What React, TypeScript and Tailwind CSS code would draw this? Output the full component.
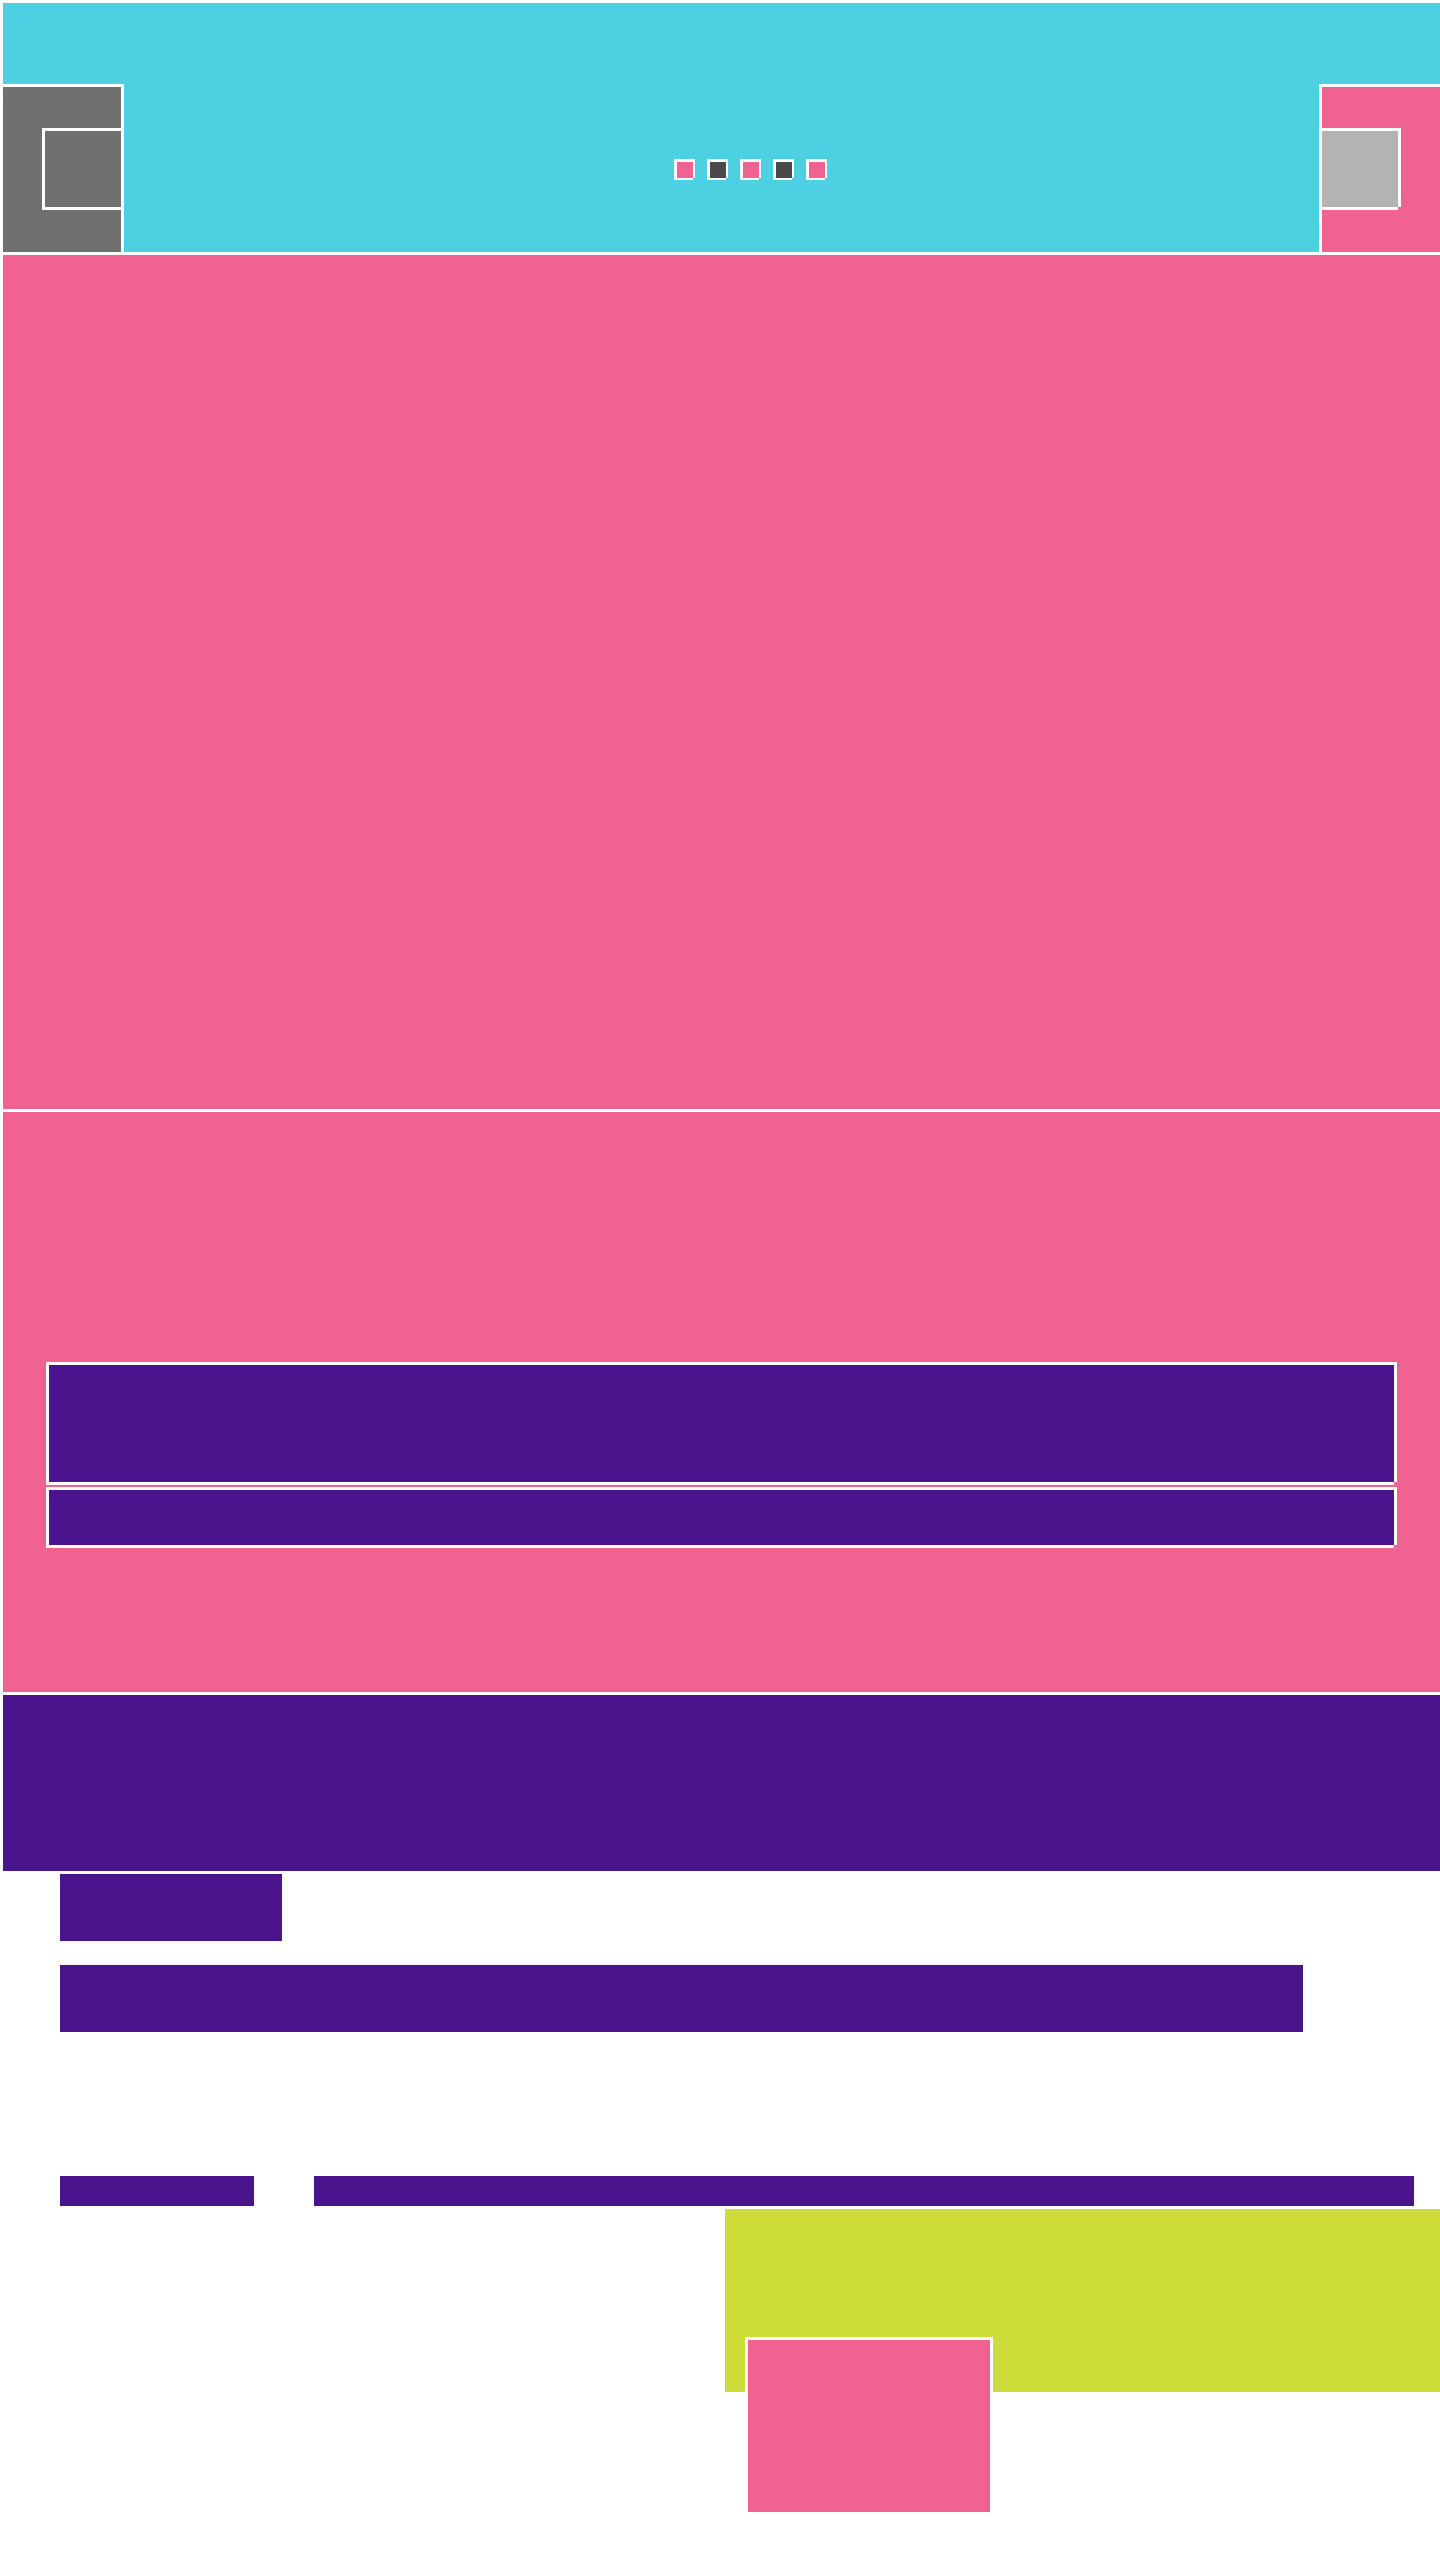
export default function App() {
  const dots = ['bg-[#f06292]', 'bg-[#4a4a4a]', 'bg-[#f06292]', 'bg-[#4a4a4a]', 'bg-[#f06292]'];

  return (
    <div className="min-h-[2560px] bg-white pt-[3px] pl-[3px]">
      {/* header */}
      <header className="h-[249px] bg-[#4dd0e1] pt-[81px]">
        <div className="flex h-[168px] items-stretch">
          <div className="w-[121px] border-t-[3px] border-r-[3px] border-white bg-[#707070] pt-[41px] pl-[39px]">
            <div className="h-[82px] w-[79px] border-y-[3px] border-l-[3px] border-white bg-[#707070]" />
          </div>

          <div className="flex flex-1 items-center gap-[14px] pl-[550px]">
            {dots.map((c, i) => (
              <div
                key={i}
                className={`h-[19px] w-[19px] border-t-[3px] border-l-[3px] border-white shadow-[2px_0_0_#fff,0_2px_0_#fff] ${c}`}
              />
            ))}
          </div>

          <div className="w-[121px] border-t-[3px] border-l-[3px] border-white bg-[#f06292] pt-[41px]">
            <div className="h-[79px] w-[76px] border-t-[3px] border-white bg-[#b3b3b3] shadow-[3px_0_0_#fff,0_3px_0_#fff]" />
          </div>
        </div>
      </header>

      {/* hero */}
      <section className="mt-[3px] h-[854px] bg-[#f06292]" />

      {/* second band */}
      <section className="mt-[3px] h-[580px] bg-[#f06292] pt-[250px] pl-[43px]">
        <div className="h-[120px] w-[1348px] border-t-[3px] border-l-[3px] border-white bg-[#4a148c] shadow-[3px_0_0_#fff,0_3px_0_#fff]" />
        <div className="mt-[5px] h-[58px] w-[1348px] border-t-[3px] border-l-[3px] border-white bg-[#4a148c] shadow-[3px_0_0_#fff,0_3px_0_#fff]" />
      </section>

      {/* purple band */}
      <section className="mt-[3px] h-[176px] bg-[#4a148c]" />

      {/* content rows */}
      <div className="pt-[3px]">
        <div className="ml-[57px] h-[67px] w-[222px] bg-[#4a148c]" />
        <div className="mt-[24px] ml-[57px] h-[67px] w-[1243px] bg-[#4a148c]" />

        <div className="mt-[144px] ml-[57px] flex gap-[60px]">
          <div className="h-[30px] w-[194px] bg-[#4a148c]" />
          <div className="h-[30px] w-[1100px] bg-[#4a148c]" />
        </div>

        <div className="mt-[3px] ml-[722px] h-[183px] bg-[#cddc39] pt-[128px] pl-[20px]">
          <div className="h-[175px] w-[245px] border-t-[3px] border-l-[3px] border-white bg-[#f06292] shadow-[3px_0_0_#fff,0_3px_0_#fff]" />
        </div>
      </div>
    </div>
  );
}
